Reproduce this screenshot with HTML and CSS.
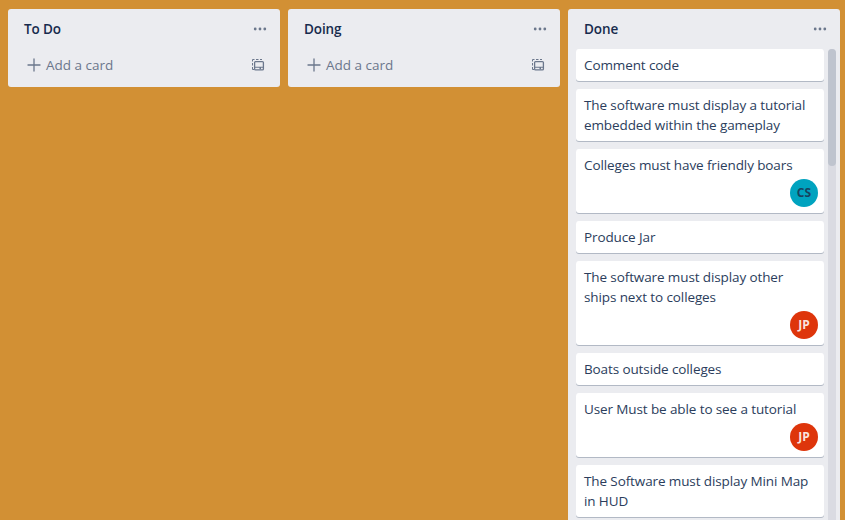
FILE: index.html
```html
<!DOCTYPE html>
<html lang="en">
<head>
<meta charset="utf-8">
<title>Board</title>
<link rel="stylesheet" href="styles.css">
</head>
<body>
<svg class="defs" width="0" height="0" aria-hidden="true">
  <symbol id="dots" viewBox="0 0 16 16"><circle cx="3.200" cy="8" r="1.400"/><circle cx="8" cy="8" r="1.400"/><circle cx="12.800" cy="8" r="1.400"/></symbol>
  <symbol id="plus" viewBox="0 0 16 16"><path d="M8 2v12M2 8h12" fill="none" stroke="currentColor" stroke-width="1.300" stroke-linecap="round"/></symbol>
  <symbol id="template" viewBox="0 0 16 16"><path d="M2.500 4.500v-2h2M6 2.500h2.500M10 2.500h2M2.500 6v2.500M2.500 10v2.500h1.500" fill="none" stroke="currentColor" stroke-width="1"/><rect x="4.600" y="4.600" width="8.800" height="8.300" rx="1" fill="none" stroke="currentColor" stroke-width="1.300"/><path d="M5 9.700h8v1.100H5zM9.500 10.800h1.500v1.500H9.500z"/></symbol>
</svg>
<main class="board">
  <section class="list">
    <header class="list-header"><h2>To Do</h2><svg class="icon"><use href="#dots"/></svg></header>
    <footer class="composer"><svg class="icon"><use href="#plus"/></svg><span>Add a card</span><svg class="icon template"><use href="#template"/></svg></footer>
  </section>
  <section class="list">
    <header class="list-header"><h2>Doing</h2><svg class="icon"><use href="#dots"/></svg></header>
    <footer class="composer"><svg class="icon"><use href="#plus"/></svg><span>Add a card</span><svg class="icon template"><use href="#template"/></svg></footer>
  </section>
  <section class="list done">
    <header class="list-header"><h2>Done</h2><svg class="icon"><use href="#dots"/></svg></header>
    <div class="list-body">
      <div class="cards">
        <article class="card"><p>Comment code</p></article>
        <article class="card"><p>The software must display a tutorial<br>embedded within the gameplay</p></article>
        <article class="card"><p>Colleges must have friendly boars</p><span class="avatar teal">CS</span></article>
        <article class="card"><p>Produce Jar</p></article>
        <article class="card"><p>The software must display other<br>ships next to colleges</p><span class="avatar red">JP</span></article>
        <article class="card"><p>Boats outside colleges</p></article>
        <article class="card"><p>User Must be able to see a tutorial</p><span class="avatar red">JP</span></article>
        <article class="card"><p>The Software must display Mini Map<br>in HUD</p></article>
      </div>
      <div class="scrollbar"><div class="thumb"></div></div>
    </div>
  </section>
</main>
</body>
</html>
```
FILE: styles.css
```css
* { box-sizing: border-box; }
body { margin: 0; height: 520px; overflow: hidden; background: #d29034; color: #172b4d; font: 13.5px/20px "Open Sans", "Noto Sans", sans-serif; }
.defs { display: none; }
.board { display: flex; align-items: flex-start; gap: 8px; height: 520px; padding: 9px 0 0 8px; }
.list { flex: 0 0 272px; height: 78px; background: #ebecf0; border-radius: 3px; }
.done { height: 511px; border-radius: 3px 3px 0 0; }
.list-header { display: flex; align-items: center; justify-content: space-between; height: 40px; padding: 0 12px 0 16px; color: #6b778c; }
h2 { margin: 0; color: #172b4d; font-size: 13.5px; font-weight: 600; line-height: 20px; letter-spacing: -.1px; }
.icon { width: 16px; height: 16px; fill: currentColor; flex: none; }
.composer { display: flex; align-items: center; gap: 4px; height: 32px; padding: 0 14px 0 18px; color: #6b778c; }
.template { margin-left: auto; }
.list-body { display: flex; justify-content: space-between; padding: 0 4px 0 8px; height: 471px; overflow: hidden; }
.cards { width: 248px; }
.card { display: flex; flex-direction: column; margin-bottom: 8px; padding: 6px 6px 6px 8px; background: #fff; border-radius: 3px; box-shadow: 0 1px 0 rgba(9,30,66,.25); }
.card p { margin: 0; white-space: nowrap; color: #2b3d5c; letter-spacing: -.11px; }
.avatar { align-self: flex-end; width: 28px; height: 28px; margin-top: 4px; border-radius: 50%; font-size: 12px; font-weight: 700; line-height: 28px; text-align: center; }
.teal { background: #00a3bf; color: #17435f; }
.red { background: #de350b; color: #f9e5df; }
.scrollbar { width: 8px; height: 480px; background: #dadbe2; border-radius: 4px; }
.thumb { height: 117px; background: #bfc4ce; border-radius: 4px; }
```
